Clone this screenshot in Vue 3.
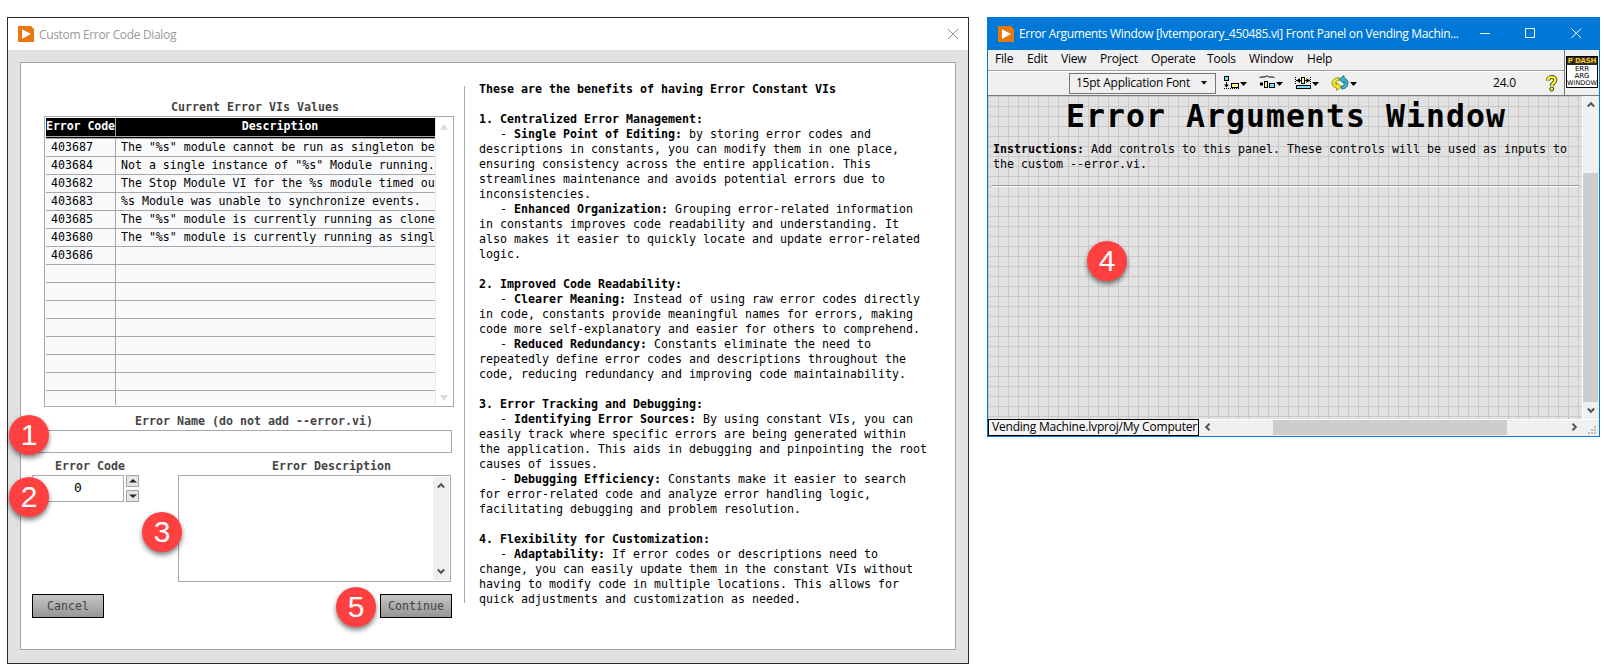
<script setup>
const rows = [
  ['403687', 'The "%s" module cannot be run as singleton be'],
  ['403684', 'Not a single instance of "%s" Module running.'],
  ['403682', 'The Stop Module VI for the %s module timed ou'],
  ['403683', '%s Module was unable to synchronize events.'],
  ['403685', 'The "%s" module is currently running as clone'],
  ['403680', 'The "%s" module is currently running as singl'],
  ['403686', ''],
  ...Array.from({ length: 8 }, () => ['', '']),
]

// Each line: [leading text, bold part, trailing text]
const lines = [
  ['', 'These are the benefits of having Error Constant VIs', ''],
  ['', '', ''],
  ['', '1. Centralized Error Management:', ''],
  ['   - ', 'Single Point of Editing:', ' by storing error codes and'],
  ['descriptions in constants, you can modify them in one place,', '', ''],
  ['ensuring consistency across the entire application. This', '', ''],
  ['streamlines maintenance and avoids potential errors due to', '', ''],
  ['inconsistencies.', '', ''],
  ['   - ', 'Enhanced Organization:', ' Grouping error-related information'],
  ['in constants improves code readability and understanding. It', '', ''],
  ['also makes it easier to quickly locate and update error-related', '', ''],
  ['logic.', '', ''],
  ['', '', ''],
  ['', '2. Improved Code Readability:', ''],
  ['   - ', 'Clearer Meaning:', ' Instead of using raw error codes directly'],
  ['in code, constants provide meaningful names for errors, making', '', ''],
  ['code more self-explanatory and easier for others to comprehend.', '', ''],
  ['   - ', 'Reduced Redundancy:', ' Constants eliminate the need to'],
  ['repeatedly define error codes and descriptions throughout the', '', ''],
  ['code, reducing redundancy and improving code maintainability.', '', ''],
  ['', '', ''],
  ['', '3. Error Tracking and Debugging:', ''],
  ['   - ', 'Identifying Error Sources:', ' By using constant VIs, you can'],
  ['easily track where specific errors are being generated within', '', ''],
  ['the application. This aids in debugging and pinpointing the root', '', ''],
  ['causes of issues.', '', ''],
  ['   - ', 'Debugging Efficiency:', ' Constants make it easier to search'],
  ['for error-related code and analyze error handling logic,', '', ''],
  ['facilitating debugging and problem resolution.', '', ''],
  ['', '', ''],
  ['', '4. Flexibility for Customization:', ''],
  ['   - ', 'Adaptability:', ' If error codes or descriptions need to'],
  ['change, you can easily update them in the constant VIs without', '', ''],
  ['having to modify code in multiple locations. This allows for', '', ''],
  ['quick adjustments and customization as needed.', '', ''],
]

const menu = ['File', 'Edit', 'View', 'Project', 'Operate', 'Tools', 'Window', 'Help']
</script>

<template>
  <main class="stage">
    <section class="dialog">
      <header class="dialog-title">
        <svg class="logo" width="16" height="16" viewBox="0 0 16 16">
          <path d="M0 0h13l3 3v13H0z" fill="#e8780c" />
          <path d="M4 3.2 13 8 4 12.8z" fill="#fff" />
        </svg>
        <span class="title-text">Custom Error Code Dialog</span>
        <svg class="dialog-close" width="12" height="12" viewBox="0 0 12 12">
          <path d="M1 1l10 10M11 1L1 11" stroke="#8e8e8e" stroke-width="1" fill="none" />
        </svg>
      </header>

      <div class="sheet">
        <div class="form">
          <div class="label table-label">Current Error VIs Values</div>
          <div class="table">
            <div class="grid">
              <div class="row head">
                <span class="code">Error Code</span><span class="desc">Description</span>
              </div>
              <div class="rule"></div>
              <div v-for="(r, i) in rows" :key="i" class="row">
                <span class="code">{{ r[0] }}</span><span class="desc">{{ r[1] }}</span>
              </div>
            </div>
            <div class="table-scroll">
              <svg width="8" height="6" viewBox="0 0 8 6"><path d="M4 0l4 6H0z" fill="#dcdcdc" /></svg>
              <svg width="8" height="6" viewBox="0 0 8 6"><path d="M0 0h8L4 6z" fill="#dcdcdc" /></svg>
            </div>
          </div>
          <div class="label name-label">Error Name (do not add --error.vi)</div>
          <div class="name-input"></div>
          <div class="lower">
            <div class="code-col">
              <div class="label code-label">Error Code</div>
              <div class="numeric">
                <div class="num-input">0</div>
                <div class="spin">
                  <i><svg width="8" height="4" viewBox="0 0 8 4"><path d="M4 0l4 3.4H0z" fill="#222" /></svg></i>
                  <i><svg width="8" height="4" viewBox="0 0 8 4"><path d="M0 .5h8L4 4z" fill="#222" /></svg></i>
                </div>
              </div>
            </div>
            <div class="desc-col">
              <div class="label desc-label">Error Description</div>
              <div class="desc-input">
                <div class="desc-scroll">
                  <svg width="8" height="7" viewBox="0 0 8 7"><path d="M.8 5.5L4 2.2l3.2 3.3" stroke="#555" stroke-width="2" fill="none" /></svg>
                  <svg width="8" height="7" viewBox="0 0 8 7"><path d="M.8 1.5L4 4.8l3.2-3.3" stroke="#555" stroke-width="2" fill="none" /></svg>
                </div>
              </div>
            </div>
          </div>
          <div class="buttons">
            <button>Cancel</button>
            <button>Continue</button>
          </div>
        </div>
        <div class="divider"></div>
        <div class="benefits">
          <div v-for="(l, i) in lines" :key="i" class="line">{{ l[0] }}<b>{{ l[1] }}</b>{{ l[2] }}</div>
        </div>
      </div>
      <span class="badge b1">1</span>
      <span class="badge b2">2</span>
      <span class="badge b3">3</span>
      <span class="badge b5">5</span>
    </section>

    <section class="window">
      <header class="win-title">
        <svg class="logo" width="16" height="16" viewBox="0 0 16 16">
          <path d="M0 0h13l3 3v13H0z" fill="#e8780c" />
          <path d="M4 3.2 13 8 4 12.8z" fill="#fff" />
        </svg>
        <span class="title-text">Error Arguments Window [lvtemporary_450485.vi] Front Panel on Vending Machin...</span>
        <svg class="win-controls" width="102" height="12" viewBox="0 0 102 12">
          <path d="M0 6.5h10M45.500 1.500h9v9h-9zM91.500 1.500l9.500 9.500M101 1.500L91.500 11" stroke="#fff" fill="none" />
        </svg>
      </header>

      <div class="chrome">
        <div class="bars">
          <nav class="menu"><span v-for="m in menu" :key="m" :class="'m-' + m.toLowerCase()">{{ m }}</span></nav>
          <div class="tools">
            <div class="font-select">
              <span>15pt Application Font</span>
              <svg width="6" height="4" viewBox="0 0 6 4"><path d="M0 0h6L3 3.800z" fill="#111" /></svg>
            </div>
            <svg class="tool-icons" width="136" height="20" viewBox="0 0 136 20">
              <!-- align -->
              <rect x=".5" y="2.500" width="4" height="4" fill="#7fe0f5" stroke="#000" />
              <path d="M2.500 8v5" stroke="#000" />
              <path d="M0 10.500h5L2.500 13.500z" />
              <rect x="7.500" y="9.500" width="7" height="4" fill="#f7f39a" stroke="#000" />
              <path d="M0 14.500h15" stroke="#000" stroke-dasharray="1 1" />
              <path d="M16 8h7l-3.500 4z" />
              <!-- distribute -->
              <path d="M35.500 4l1-1h5l1.500-1.500 1.500 1.500h5l1 1" stroke="#000" fill="none" />
              <rect x="36" y="8.500" width="3" height="3" />
              <rect x="40.500" y="7.500" width="3" height="6" fill="#f7f39a" stroke="#000" />
              <rect x="45.500" y="9.500" width="5" height="4" fill="#7fe0f5" stroke="#000" />
              <path d="M52 8h7l-3.500 4z" />
              <!-- resize -->
              <path d="M71.500 3v8M86.500 3v8" stroke="#000" stroke-dasharray="1 1" />
              <path d="M72 6.500h14" stroke="#000" />
              <path d="M76 4v5l-3.500-2.500zM82.500 4v5l3.500-2.500z" />
              <rect x="77.500" y="3.500" width="3" height="6" fill="#f7f39a" stroke="#000" />
              <rect x="72" y="11" width="15" height="4" fill="#000" />
              <rect x="73" y="12" width="13" height="2" fill="#7fe0f5" />
              <path d="M88 8h7l-3.500 4z" />
              <!-- reorder -->
              <path d="M115 3.500c-4 0-7 2.500-7 5.500 0 2.500 1.500 4.500 4.500 5v2.500l5-4-5-4v2.300c-1-.4-1.300-1-1.200-2 .2-1.300 1.700-2.300 3.700-2.300z" fill="#f0e81c" stroke="#8a8410" stroke-width=".8" />
              <path d="M117.500 15c4 0 6.500-2.500 6.500-6 0-2.500-1.500-4.500-4-5V1.500l-5 4 5 4V7.200c.8.300 1.100 1 1 2-.2 1.500-1.500 2.500-3.500 2.800z" fill="#3db3cc" stroke="#14606e" stroke-width=".8" />
              <path d="M126 8h7l-3.500 4z" />
            </svg>
            <span class="zoom">24.0</span>
            <svg class="help" width="12" height="17" viewBox="0 0 12 17">
              <path d="M2 5.500C2 1 9.300 1 9.300 5c0 3-3.600 3-3.600 6" fill="none" stroke="#222" stroke-width="4" />
              <path d="M2 5.500C2 1 9.300 1 9.300 5c0 3-3.600 3-3.600 6" fill="none" stroke="#f4ee1e" stroke-width="2.600" />
              <circle cx="5.700" cy="14" r="2" fill="#f4ee1e" stroke="#222" stroke-width=".9" />
            </svg>
          </div>
        </div>
        <div class="vi-icon-pane">
          <div class="vi-icon"><b>P DASH</b><span>ERR</span><span>ARG</span><span class="wide">WINDOW</span></div>
        </div>
      </div>

      <div class="body">
        <div class="panel">
          <h1>Error Arguments Window</h1>
          <p><b>Instructions:</b> Add controls to this panel. These controls will be used as inputs to<br>the custom --error.vi.</p>
          <div class="hr"></div>
        </div>
        <div class="vscroll">
          <svg width="8" height="7" viewBox="0 0 8 7"><path d="M.8 5.500L4 2.200l3.200 3.300" stroke="#555" stroke-width="2" fill="none" /></svg>
          <div class="vthumb"></div>
          <svg width="8" height="7" viewBox="0 0 8 7"><path d="M.8 1.500L4 4.800l3.200-3.300" stroke="#555" stroke-width="2" fill="none" /></svg>
        </div>
      </div>
      <footer class="foot">
        <div class="project">Vending Machine.lvproj/My Computer</div>
        <svg class="left" width="7" height="8" viewBox="0 0 7 8"><path d="M5.500.8L2.200 4l3.300 3.200" stroke="#555" stroke-width="2" fill="none" /></svg>
        <div class="hthumb"></div>
        <svg class="right" width="7" height="8" viewBox="0 0 7 8"><path d="M1.500.8L4.800 4 1.500 7.200" stroke="#555" stroke-width="2" fill="none" /></svg>
        <svg class="grip" width="8" height="8" viewBox="0 0 8 8"><path d="M6 0h2v2H6zM3 3h2v2H3zM6 3h2v2H6zM0 6h2v2H0zM3 6h2v2H3zM6 6h2v2H6z" fill="#bdbdbd" /></svg>
      </footer>
      <span class="badge b4">4</span>
    </section>
  </main>
</template>

<style>
body { background: #fff; }
</style>

<style scoped>
* { box-sizing: border-box; }
.stage {
  width: 1604px; height: 665px; overflow: hidden; background: #fff;
  display: flex; align-items: flex-start; gap: 18px; padding: 17px 0 0 7px;
  font-family: "DejaVu Sans Mono", monospace; font-size: 11.63px; line-height: 15px; color: #000;
}
svg { display: block; flex: none; }

.dialog { position: relative; width: 962px; height: 647px; border: 1px solid #2b2b2b; background: #e1e1e1; flex: none; }
.dialog-title { height: 32px; background: #fff; display: flex; align-items: center; padding: 0 9px 0 10px; color: #999; }
.title-text { font-family: "Open Sans", "Noto Sans", sans-serif; font-size: 12px; letter-spacing: -0.34px; margin-left: 5px; white-space: nowrap; }
.dialog-close { margin-left: auto; }

.sheet { margin: 12px 0 0 12px; width: 936px; height: 588px; border: 1px solid #a6a6a6; background: #fff; display: flex; padding-left: 11px; }
.form { width: 421px; flex: none; display: flex; flex-direction: column; }
.label { font-weight: bold; color: #444; height: 15px; white-space: pre; flex: none; }
.table-label { margin: 37px 0 0 139px; }
.table { width: 410px; height: 291px; margin: 1px 0 0 12px; border: 1px solid #a6a8aa; padding: 1px; display: flex; flex: none; }
.grid { width: 389px; height: 287px; overflow: hidden; background: #f9fafc; flex: none; }
.row { height: 18px; display: flex; border-bottom: 1px solid #a6a8aa; line-height: 16px; white-space: pre; overflow: hidden; }
.code { width: 70px; flex: none; border-right: 1px solid #a6a8aa; padding-left: 5px; }
.desc { flex: 1; padding-left: 5px; letter-spacing: -0.03px; }
.head { height: 19px; background: #000; color: #fff; font-weight: bold; line-height: 17px; }
.head .code { padding-left: 0; letter-spacing: -0.1px; }
.head .desc { text-align: center; padding: 0 0 0 9px; }
.rule { height: 2px; background: #000; border-bottom: 1px solid #a6a8aa; }
.table-scroll { width: 17px; border-left: 1px solid #e6e8ea; display: flex; flex-direction: column; justify-content: space-between; align-items: center; padding: 6px 1px 4px 0; }
.name-label { margin: 7px 0 0 103px; }
.name-input { margin-top: 1px; width: 420px; height: 23px; border: 1px solid #a6a8aa; flex: none; }
.lower { display: flex; height: 130px; }
.code-col { width: 146px; flex: none; }
.code-label { margin: 6px 0 0 23px; }
.numeric { display: flex; margin-top: 1px; gap: 2px; }
.num-input { width: 92px; height: 27px; border: 1px solid #a6a8aa; font-size: 13px; line-height: 24px; text-align: center; }
.spin { display: flex; flex-direction: column; gap: 3px; }
.spin i { width: 13px; height: 12px; border: 1px solid #a0a2a4; background: #e6e6e6; display: flex; align-items: center; justify-content: center; }
.desc-label { margin: 6px 0 0 94px; }
.desc-input { margin-top: 1px; width: 273px; height: 107px; border: 1px solid #a6a8aa; padding: 1px; display: flex; justify-content: flex-end; }
.desc-scroll { width: 16px; background: #f0f0f0; display: flex; flex-direction: column; justify-content: space-between; align-items: center; padding: 5px 1px 5px 0; }
.buttons { display: flex; justify-content: space-between; width: 420px; margin-top: 11px; }
button { width: 72px; height: 24px; padding: 0; border: 1px solid #000; border-radius: 0; background: linear-gradient(#c6c6c6, #969696); font: inherit; color: #444; }
.divider { width: 1px; height: 517px; margin: 23px 0 0 11px; background: #a8a8a8; flex: none; }
.benefits { padding: 19px 0 0 14px; }
.line { height: 15px; white-space: pre; }

.badge {
  position: absolute; width: 40px; height: 40px; border-radius: 50%; background: #ff4040; color: #fff;
  font: 30px/40px "Liberation Sans", Arial, sans-serif; text-align: center;
  box-shadow: 0 3px 5px rgba(0, 0, 0, .5);
}
.b1 { left: 1px; top: 397px; }
.b2 { left: 1px; top: 459px; }
.b3 { left: 134px; top: 494px; }
.b5 { left: 328px; top: 569px; }
.b4 { left: 99px; top: 224px; }

.window { position: relative; width: 613px; height: 420px; border: 1px solid #0078d7; border-top: 0; background: #f0f0f0; flex: none; }
.win-title { height: 33px; background: #0078d7; color: #fff; display: flex; align-items: center; padding: 0 17px 0 10px; }
.win-controls { margin: -2px 0 0 auto; }
.chrome { display: flex; height: 46px; border-bottom: 1px solid #777; font-family: "Open Sans", "Noto Sans", sans-serif; font-size: 12px; }
.bars { width: 576px; flex: none; }
.menu { display: flex; height: 21px; border-bottom: 1px solid #a0a0a0; padding-left: 7px; line-height: 17px; letter-spacing: -0.2px; }
.menu span { flex: none; white-space: nowrap; }
.m-file { width: 32px; }
.m-edit { width: 34px; }
.m-view { width: 39px; }
.m-project { width: 51px; }
.m-operate { width: 56px; }
.m-tools { width: 42px; }
.m-window { width: 58px; }
.tools { display: flex; height: 24px; border-top: 1px solid #fff; padding-left: 81px; }
.font-select { width: 147px; height: 21px; margin-top: 1px; border: 1px solid #777; display: flex; align-items: center; justify-content: space-between; padding: 0 8px 1px 6px; letter-spacing: -0.25px; white-space: nowrap; flex: none; }
.font-select span { margin-top: -1px; }
.tool-icons { margin: 2px 0 0 8px; }
.zoom { margin: 2px 0 0 133px; width: 53px; line-height: 18px; letter-spacing: -0.2px; }
.help { margin-top: 3px; }
.vi-icon-pane { width: 35px; border-left: 1px solid #777; padding: 6px 0 0 1px; }
.vi-icon { width: 32px; height: 32px; border: 1px solid #000; background: #fff; display: flex; flex-direction: column; align-items: center; font: 7px/7px "DejaVu Sans", sans-serif; }
.vi-icon b { width: 30px; height: 8px; line-height: 8px; background: #2b2b2b; color: #f5c518; text-align: center; white-space: nowrap; flex: none; margin-bottom: 1px; letter-spacing: -0.2px; }
.vi-icon .wide { font-size: 6.500px; }

.body { display: flex; height: 323px; }
.panel {
  width: 594px; height: 323px; flex: none; overflow: hidden; background-color: #e2e2e2; padding: 0 0 0 4px;
  background-image: linear-gradient(#c9c9c9 1px, transparent 1px), linear-gradient(90deg, #c9c9c9 1px, transparent 1px);
  background-size: 10px 10px; background-position: 0 0;
}
h1 { margin: 0 0 0 74px; font-size: 31.500px; line-height: 40px; letter-spacing: 1.040px; font-weight: bold; white-space: nowrap; height: 46px; }
p { margin: 0 0 0 1px; height: 43px; white-space: nowrap; }
.hr { height: 2px; width: 587px; background: #999; border-bottom: 1px solid #fff; }
.vscroll { flex: 1; border-left: 1px solid #fff; background: #f0f0f0; display: flex; flex-direction: column; align-items: center; padding: 5px 1px 0 0; }
.vthumb { width: 15px; height: 229px; margin: 65px 0 5px; background: #cdcdcd; flex: none; }
.foot { display: flex; height: 17px; border-top: 1px solid #fff; }
.project { width: 211px; height: 17px; margin-top: -1px; border: 1px solid #000; background: #f4f4f4; padding-left: 3px; font: 12px/14px "Open Sans", "Noto Sans", sans-serif; letter-spacing: -0.2px; white-space: nowrap; flex: none; }
.left { margin: 3px 0 0 5px; }
.hthumb { width: 234px; height: 15px; margin-left: 62px; background: #cdcdcd; }
.right { margin: 3px 0 0 64px; }
.grip { margin: 6px 0 0 10px; }
</style>
